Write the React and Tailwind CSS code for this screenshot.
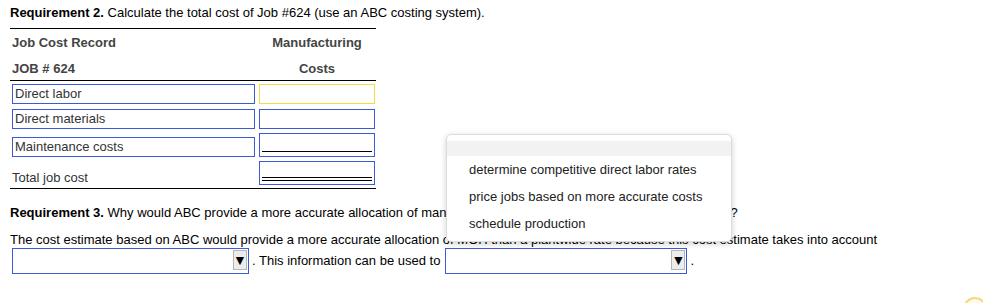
import React from "react";

const blue = "border-[#3b5bd6]";

const Select = ({ width }) => (
  <div className={`relative h-[26px] border ${blue} bg-white ${width}`}>
    <div className="absolute right-[1px] top-[1px] flex h-[20px] w-[14px] items-center justify-center border border-[#b5b5b5] bg-[#ececec] text-[14px] leading-none text-black">
      ▼
    </div>
  </div>
);

const LabelBox = ({ children }) => (
  <div className={`flex h-[20px] w-[243px] items-center border ${blue} pl-[2px] text-[13px] text-[#333]`}>
    {children}
  </div>
);

const options = [
  "determine competitive direct labor rates",
  "price jobs based on more accurate costs",
  "schedule production",
];

export default function App() {
  return (
    <div className="relative h-[303px] w-[983px] overflow-hidden bg-white font-['Liberation_Sans',Arial,sans-serif] text-[13px] text-black">
      <div className="pl-[10px] pt-[5px]">
        <p className="leading-[16px]">
          <b>Requirement 2.</b> Calculate the total cost of Job #624 (use an ABC costing system).
        </p>

        {/* Job cost record */}
        <div className="mt-[7px] w-[366px] border-t border-black">
          <div className="flex h-[28px] items-center text-[13px] font-bold text-[#444]">
            <span className="w-[248px] pl-[2px]">Job Cost Record</span>
            <span className="w-[118px] text-center">Manufacturing</span>
          </div>
          <div className="flex h-[24px] items-center border-b border-black text-[13px] font-bold text-[#444]">
            <span className="w-[248px] pl-[2px]">JOB # 624</span>
            <span className="w-[118px] text-center">Costs</span>
          </div>

          <div className="mt-[3px] flex gap-[4px] pl-[2px]">
            <LabelBox>Direct labor</LabelBox>
            <div className="h-[20px] w-[116px] border border-[#f3dc4c]" />
          </div>
          <div className="mt-[5px] flex gap-[4px] pl-[2px]">
            <LabelBox>Direct materials</LabelBox>
            <div className={`h-[20px] w-[116px] border ${blue}`} />
          </div>
          <div className="mt-[4px] flex items-end gap-[4px] pl-[2px]">
            <LabelBox>Maintenance costs</LabelBox>
            <div className={`flex h-[24px] w-[116px] items-end border ${blue} px-[2px] pb-[4px]`}>
              <div className="h-[1px] w-full bg-black" />
            </div>
          </div>
          <div className="mt-[4px] flex items-end gap-[4px] border-b border-black pb-[3px] pl-[2px]">
            <div className="w-[243px] text-[13px] leading-[14px] text-[#333]">Total job cost</div>
            <div className={`flex h-[24px] w-[116px] flex-col justify-end gap-[2px] border ${blue} px-[2px] pb-[3px]`}>
              <div className="h-[1px] w-full bg-black" />
              <div className="h-[1px] w-full bg-black" />
            </div>
          </div>
        </div>

        <p className="mt-[16px] leading-[16px]">
          <b>Requirement 3.</b> Why would ABC provide a more accurate allocation of manufacturing overhead costs than the plantwide rate?
        </p>
        <p className="mt-[11px] leading-[16px]">
          The cost estimate based on ABC would provide a more accurate allocation of MOH than a plantwide rate because this cost estimate takes into account
        </p>
        <div className="flex items-center pl-[2px]">
          <Select width="w-[237px]" />
          <span className="pl-[3px] pr-[5px]">. This information can be used to</span>
          <Select width="w-[242px]" />
          <span className="pl-[3px]">.</span>
        </div>
      </div>

      {/* open dropdown list */}
      <div className="absolute left-[446px] top-[134px] h-[108px] w-[286px] rounded-[5px] border border-[#dcdcdc] bg-white pt-[6px] text-[13px] text-[#222] shadow-[0_2px_6px_rgba(0,0,0,0.18)]">
        <div className="h-[15px] bg-[#f2f2f2]" />
        {options.map((o) => (
          <div key={o} className="flex h-[27px] items-center pl-[22px]">
            {o}
          </div>
        ))}
      </div>

      {/* corner widget */}
      <div className="absolute left-[963px] top-[297px] h-[24px] w-[24px] rounded-full border-[2px] border-[#f5d77a] bg-[#fffbe8]" />
    </div>
  );
}
